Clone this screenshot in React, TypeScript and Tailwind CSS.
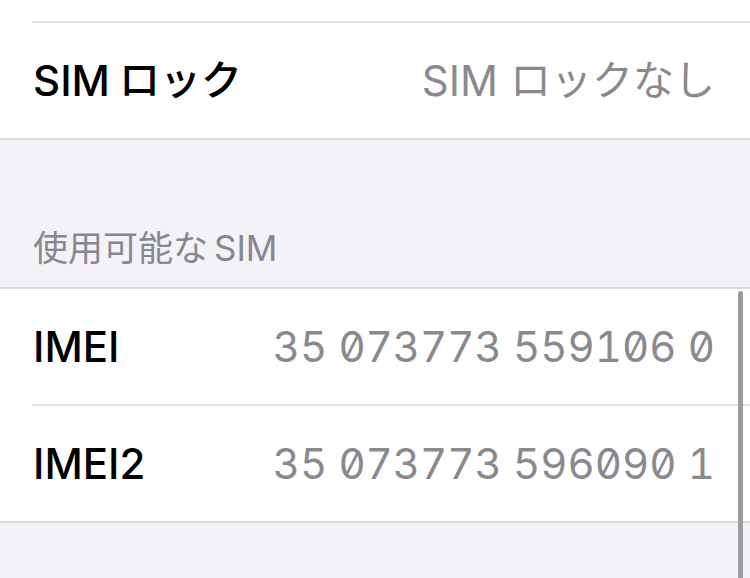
import React from "react";

const font = {
  fontFamily: '"Inter", "Noto Sans CJK JP", sans-serif',
};

function Row({ label, value, mono }: { label: React.ReactNode; value: React.ReactNode; mono?: boolean }) {
  return (
    <div className="flex h-[115px] items-center justify-between pl-[33px] pr-[35px]">
      <span className="flex items-center text-[42px] font-medium leading-none text-black">{label}</span>
      <span
        className={
          "flex items-center text-[42px] leading-none text-[#8a8a8e] " +
          (mono ? "tabular-nums slashed-zero" : "")
        }
      >
        {value}
      </span>
    </div>
  );
}

export default function App() {
  return (
    <div
      className="relative h-[578px] w-[750px] overflow-hidden bg-[#f2f2f7]"
      style={font}
    >
      <div className="bg-white">
        <div className="h-[21px]" />
        <div className="ml-[32px] h-[2px] bg-[#e2e2e6]" />
        <Row
          label={
            <>
              <span>SIM</span>
              <span className="ml-[9px] text-[41px]">ロック</span>
            </>
          }
          value={
            <>
              <span>SIM</span>
              <span className="ml-[12px] text-[41px]">ロックなし</span>
            </>
          }
        />
      </div>
      <div className="h-[2px] bg-[#dcdde2]" />
      <div className="flex h-[147px] items-end pb-[21px] pl-[33px]">
        <span className="flex items-center text-[35px] leading-none text-[#88888c]">
          <span>使用可能な</span>
          <span className="ml-[6px]">SIM</span>
        </span>
      </div>
      <div className="h-[2px] bg-[#dcdce0]" />
      <div className="bg-white">
        <Row label="IMEI" value="35 073773 559106 0" mono />
        <div className="ml-[32px] h-[2px] bg-[#e2e2e6]" />
        <Row label="IMEI2" value="35 073773 596090 1" mono />
      </div>
      <div className="h-[2px] bg-[#dcdce0]" />
      <div className="absolute right-[7px] top-[291px] bottom-0 w-[5px] rounded-t-full bg-[#9c9ca0]" />
    </div>
  );
}
